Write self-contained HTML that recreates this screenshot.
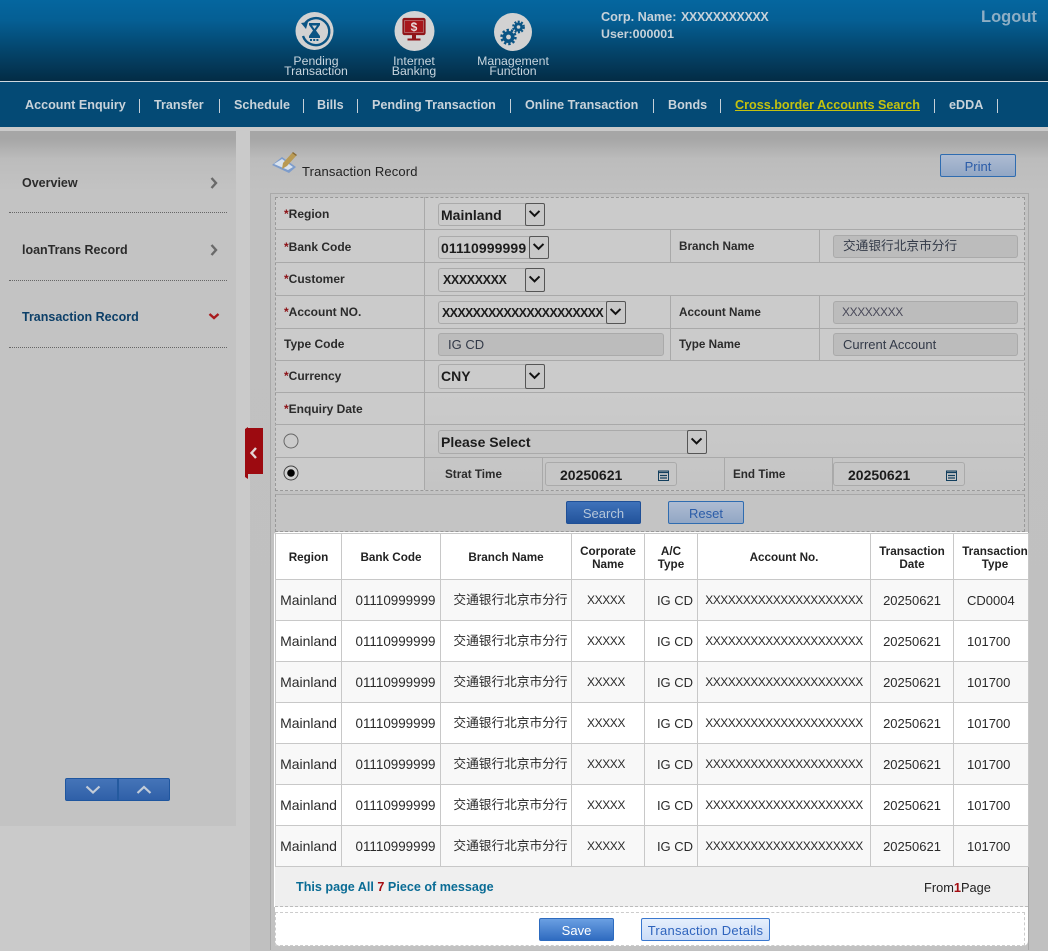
<!DOCTYPE html>
<html><head><meta charset="utf-8"><title>Transaction Record</title>
<style>
*{box-sizing:border-box}
html,body{margin:0;padding:0}
body{width:1048px;height:951px;position:relative;overflow:hidden;background:#cacaca;font-family:"Liberation Sans","Noto Sans CJK SC",sans-serif;color:#222}
.a{position:absolute;white-space:nowrap}
.n{position:absolute;top:97px;font:bold 12.6px/16px "Liberation Sans",sans-serif;color:#c9d3da;white-space:nowrap}
.s{position:absolute;top:99px;width:1px;height:14px;background:#c5d0d8}
.il{position:absolute;width:100px;text-align:center;font-size:12.3px;line-height:10px;color:#c8d5de}
.h{position:absolute;height:1px;background:#a9a9a9;left:275px;width:749px}
.v{position:absolute;width:1px;background:#a9a9a9}
.l{position:absolute;font:bold 12px/14px "Liberation Sans",sans-serif;color:#2b2b2b;white-space:nowrap}
.l.r{font-size:11.7px;margin-top:1px}
.l b{color:#8c1015}
.sel{position:absolute;background:#cbcbcb;border:1px solid #aaa;border-radius:3px;font:bold 14px/22px "Liberation Sans",sans-serif;color:#1c1c1c;padding-left:2px;white-space:nowrap}
.sel svg{position:absolute;right:-1px;top:-1px;width:20px;height:calc(100% + 2px);background:#c8c8c8;border:1px solid #555;border-radius:2px}
.inp{position:absolute;background:#bcbcbc;border:1px solid #aaa;border-radius:3px;font:13px/21px "Liberation Sans","Noto Sans CJK SC",sans-serif;color:#333a48;padding-left:9px;white-space:nowrap}
.date{position:absolute;top:462px;width:132px;height:24px;border:1px solid #aaa;border-radius:3px;font:bold 14px/25px "Liberation Sans",sans-serif;color:#1c1c1c;padding-left:14px;background:#c6c6c6}
.date svg{position:absolute;right:7px;top:7px}
.btn{position:absolute;height:23px;border-radius:2px;text-align:center;font:13px/23px "Liberation Sans","Noto Sans CJK SC",sans-serif}
.dk{background:linear-gradient(#3f72ba,#22539b);border:1px solid #1f4f96;color:#b5c6da}
.lt{background:linear-gradient(#aebcd2,#92a7c4);border:1px solid #2f6cb0;color:#2b5ca8}
table{position:absolute;left:275px;top:533px;width:753px;border-collapse:collapse;table-layout:fixed;background:#fff}
td,th{border:1px solid #c8c8c8;text-align:center;padding:0;font:13px/13px "Liberation Sans","Noto Sans CJK SC",sans-serif;color:#2a2a2a;overflow:hidden;white-space:nowrap}
th{font:bold 11.7px/13px "Liberation Sans",sans-serif;height:46px;color:#222;background:#fff;padding-top:2px}
td{height:41px;background:#f8f8f8}
tr.w td{background:#fff}
td.m{font-size:14px}
td.d{font-size:13.4px;padding-left:9px}
td.c{font-size:12.7px;padding-left:9px}
td.i{padding-left:8px}
td.x{font-size:12px;letter-spacing:-.5px}
td.f{font-size:12px;letter-spacing:-.4px;padding-right:4px}
td.t{text-align:left;padding-left:13px}
th.t{padding-left:8px}
</style></head><body>

<div class="a" style="left:0;top:0;width:1048px;height:81px;background:linear-gradient(#05669f 0,#055f94 25%,#04456c 62%,#032c45 100%)"></div>
<div class="a" style="left:0;top:81px;width:1048px;height:1px;background:#cfd8de"></div>
<div class="a" style="left:0;top:82px;width:1048px;height:45px;background:#044a75"></div>

<svg class="a" style="left:290px;top:7px" width="50" height="50" viewBox="0 0 50 50"><circle cx="24.500" cy="24" r="19" fill="#d2d2d2"/><path d="M14 18a13.500 13.500 0 1 1-1 11" fill="none" stroke="#0a5484" stroke-width="2.400"/><path d="M11 16l7-1-2 7z" fill="#0a5484"/><path d="M19 16h11v2l-4 5.500 4 5.500v2H19v-2l4-5.500-4-5.500z" fill="#0a5484"/><path d="M22 18.500h5l-2.500 3.500z" fill="#d2d2d2"/><path d="M20 33h9" stroke="#0a5484" stroke-width="2" stroke-dasharray="2 1.200"/></svg>
<svg class="a" style="left:390px;top:7px" width="50" height="50" viewBox="0 0 50 50"><circle cx="24.500" cy="24" r="20" fill="#d4d4d4"/><rect x="13.500" y="12" width="21" height="15" rx="1" fill="none" stroke="#8f1418" stroke-width="2.200"/><rect x="15" y="13.500" width="18" height="12" fill="#a8161b"/><text x="24" y="24" text-anchor="middle" font-family="Liberation Sans" font-weight="bold" font-size="12" fill="#e8dada">$</text><path d="M22 27.500h4v4h-4zM17.500 31.500h13v2h-13z" fill="#8f1418"/></svg>
<svg class="a" style="left:490px;top:7px" width="50" height="50" viewBox="0 0 50 50"><circle cx="23" cy="25" r="19" fill="#d2d2d2"/><g fill="none" stroke="#0a5484"><circle cx="18.500" cy="30" r="4.200" stroke-width="3.600"/><circle cx="18.500" cy="30" r="7" stroke-width="2.400" stroke-dasharray="2.400 2"/><circle cx="28.500" cy="20" r="3.200" stroke-width="2.800"/><circle cx="28.500" cy="20" r="5.400" stroke-width="2" stroke-dasharray="2 1.500"/></g></svg>

<div class="il" style="left:266px;top:56px">Pending<br>Transaction</div>
<div class="il" style="left:364px;top:56px">Internet<br>Banking</div>
<div class="il" style="left:463px;top:56px">Management<br>Function</div>

<div class="a" style="left:601px;top:10px;font:bold 12.7px/15px 'Liberation Sans',sans-serif;color:#c7d2da">Corp. Name:</div>
<div class="a" style="left:681px;top:10px;font:bold 12.500px/15px 'Liberation Sans',sans-serif;letter-spacing:-.4px;color:#c7d2da">XXXXXXXXXXX</div>
<div class="a" style="left:601px;top:27px;font:bold 12.4px/15px 'Liberation Sans',sans-serif;color:#c7d2da">User:000001</div>
<div class="a" style="left:981px;top:7px;font:bold 16.500px/20px 'Liberation Sans',sans-serif;color:#8eaec4">Logout</div>

<div class="n" style="left:25px">Account Enquiry</div><div class="s" style="left:139px"></div>
<div class="n" style="left:154px">Transfer</div><div class="s" style="left:219px"></div>
<div class="n" style="left:234px">Schedule</div><div class="s" style="left:303px"></div>
<div class="n" style="left:317px">Bills</div><div class="s" style="left:357px"></div>
<div class="n" style="left:372px">Pending Transaction</div><div class="s" style="left:510px"></div>
<div class="n" style="left:525px">Online Transaction</div><div class="s" style="left:653px"></div>
<div class="n" style="left:668px">Bonds</div><div class="s" style="left:720px"></div>
<div class="n" style="left:735px;color:#c4c20e;text-decoration:underline">Cross.border Accounts Search</div><div class="s" style="left:934px"></div>
<div class="n" style="left:949px">eDDA</div><div class="s" style="left:997px"></div>

<!-- sidebar -->
<div class="a" style="left:0;top:131px;width:236px;height:695px;background:linear-gradient(#a6a6a6 0,#a6a6a6 8px,#bcbcbc 28px,#c3c3c3 60px,#c3c3c3 100%)"></div>
<div class="a" style="left:22px;top:176px;font:bold 12.500px/15px 'Liberation Sans',sans-serif;color:#2b2b2b">Overview</div>
<div class="a" style="left:22px;top:243px;font:bold 12.500px/15px 'Liberation Sans',sans-serif;color:#2b2b2b">loanTrans Record</div>
<div class="a" style="left:22px;top:310px;font:bold 12.500px/15px 'Liberation Sans',sans-serif;color:#0c3f68">Transaction Record</div>
<svg class="a" style="left:209px;top:176px" width="10" height="14"><path d="M2.500 2l4.500 5-4.500 5" fill="none" stroke="#6a6a6a" stroke-width="2.400"/></svg>
<svg class="a" style="left:209px;top:243px" width="10" height="14"><path d="M2.500 2l4.500 5-4.500 5" fill="none" stroke="#6a6a6a" stroke-width="2.400"/></svg>
<svg class="a" style="left:208px;top:312px" width="12" height="10"><path d="M1.500 2l4.500 4 4.500-4" fill="none" stroke="#a81a1d" stroke-width="2.400"/></svg>
<div class="a" style="left:9px;top:212px;width:218px;border-top:1px dotted #666"></div>
<div class="a" style="left:9px;top:280px;width:218px;border-top:1px dotted #666"></div>
<div class="a" style="left:9px;top:347px;width:218px;border-top:1px dotted #666"></div>
<div class="a" style="left:65px;top:778px;width:105px;height:23px;background:linear-gradient(#4574b8,#2f60a8);border:1px solid #1f569f;border-radius:2px"></div>
<div class="a" style="left:117px;top:779px;width:2px;height:21px;background:#245a9f"></div>
<svg class="a" style="left:84px;top:784px" width="18" height="12"><path d="M2.500 2.500l6.500 6 6.500-6" fill="none" stroke="#c3ccd8" stroke-width="2.200"/></svg>
<svg class="a" style="left:135px;top:784px" width="18" height="12"><path d="M2.500 9l6.500-6 6.500 6" fill="none" stroke="#c3ccd8" stroke-width="2.200"/></svg>

<!-- main panel -->
<div class="a" style="left:250px;top:131px;width:798px;height:820px;background:linear-gradient(#a6a6a6 0,#a6a6a6 8px,#bcbcbc 28px,#c1c1c1 60px,#c0c0c0 100%)"></div>

<!-- red tab -->
<svg class="a" style="left:245px;top:425px" width="19" height="57"><path d="M0 4L3 2V3h15v46H3v5L0 52z" fill="#9c0a10"/><path d="M11 23l-4.500 5 4.500 5" fill="none" stroke="#e3d6d6" stroke-width="2.400"/></svg>

<svg class="a" style="left:271px;top:150px" width="28" height="28" viewBox="0 0 28 28"><path d="M1 15l10-8 14 10-7 6z" fill="#7d9ccb"/><path d="M3 14l8-5 11 8-5 3z" fill="#d9e3ef"/><path d="M11 19l1-6L21 3l4 3-9 10z" fill="#b99a54"/><path d="M21 3l1-1 4 3-1 1z" fill="#8a6a30"/></svg>
<div class="a" style="left:302px;top:164px;font:13px/16px 'Liberation Sans',sans-serif;letter-spacing:.15px;color:#222">Transaction Record</div>
<div class="btn lt" style="left:940px;top:154px;width:76px">Print</div>

<!-- form -->
<div class="a" style="left:270px;top:193px;width:759px;height:757px;border:1px solid #a9a9a9;border-bottom:0;background:#c2c2c2"></div>
<div class="a" style="left:275px;top:197px;width:750px;height:294px;background:#cbcbcb;border:1px dashed #999"></div>
<div class="a" style="left:424px;top:393px;width:600px;height:97px;background:linear-gradient(#cbcbcb,#c4c4c4)"></div>
<div class="a" style="left:275px;top:494px;width:750px;height:38px;background:#c4c4c4;border:1px dashed #999;border-top:1px solid #a9a9a9"></div>

<div class="h" style="top:229px"></div><div class="h" style="top:262px"></div><div class="h" style="top:295px"></div><div class="h" style="top:328px"></div><div class="h" style="top:360px"></div><div class="h" style="top:392px"></div><div class="h" style="top:424px"></div><div class="h" style="top:457px"></div>
<div class="v" style="left:424px;top:197px;height:293px"></div>
<div class="v" style="left:670px;top:229px;height:33px"></div><div class="v" style="left:819px;top:229px;height:33px"></div>
<div class="v" style="left:670px;top:295px;height:65px"></div><div class="v" style="left:819px;top:295px;height:65px"></div>
<div class="v" style="left:542px;top:457px;height:33px"></div><div class="v" style="left:724px;top:457px;height:33px"></div><div class="v" style="left:832px;top:457px;height:33px"></div>

<div class="l" style="left:284px;top:207px"><b>*</b>Region</div>
<div class="l" style="left:284px;top:240px"><b>*</b>Bank Code</div>
<div class="l" style="left:284px;top:272px"><b>*</b>Customer</div>
<div class="l" style="left:284px;top:305px"><b>*</b>Account NO.</div>
<div class="l" style="left:284px;top:337px">Type Code</div>
<div class="l" style="left:284px;top:369px"><b>*</b>Currency</div>
<div class="l" style="left:284px;top:402px"><b>*</b>Enquiry Date</div>
<div class="l r" style="left:679px;top:239px">Branch Name</div>
<div class="l r" style="left:679px;top:305px">Account Name</div>
<div class="l r" style="left:679px;top:337px">Type Name</div>
<div class="l r" style="left:445px;top:467px">Strat Time</div>
<div class="l r" style="left:733px;top:467px">End Time</div>

<div class="sel" style="left:438px;top:203px;width:107px;height:23px">Mainland<svg viewBox="0 0 20 23"><path d="M4 7.500l5.500 5.500L15 7.500" fill="none" stroke="#111" stroke-width="2.200"/></svg></div>
<div class="sel" style="left:438px;top:236px;width:111px;height:23px;letter-spacing:.1px">01110999999<svg viewBox="0 0 20 23"><path d="M4 7.500l5.500 5.500L15 7.500" fill="none" stroke="#111" stroke-width="2.200"/></svg></div>
<div class="sel" style="left:438px;top:268px;width:107px;height:24px;padding-left:4px;font-size:12.500px;letter-spacing:-.4px">XXXXXXXX<svg viewBox="0 0 20 24"><path d="M4 8l5.500 5.500L15 8" fill="none" stroke="#111" stroke-width="2.200"/></svg></div>
<div class="sel" style="left:438px;top:301px;width:188px;height:23px;padding-left:3px;font-size:12.500px;letter-spacing:-.67px">XXXXXXXXXXXXXXXXXXXXX<svg viewBox="0 0 20 23"><path d="M4 7.500l5.500 5.500L15 7.500" fill="none" stroke="#111" stroke-width="2.200"/></svg></div>
<div class="sel" style="left:438px;top:364px;width:107px;height:25px">CNY<svg viewBox="0 0 20 25"><path d="M4 8.500l5.500 5.500L15 8.500" fill="none" stroke="#111" stroke-width="2.200"/></svg></div>
<div class="sel" style="left:438px;top:430px;width:269px;height:24px;background:#c5c5c5">Please Select<svg viewBox="0 0 20 24"><path d="M4 8l5.500 5.500L15 8" fill="none" stroke="#111" stroke-width="2.200"/></svg></div>

<div class="inp" style="left:438px;top:333px;width:226px;height:23px">IG CD</div>
<div class="inp" style="left:833px;top:235px;width:185px;height:23px;font-size:12.7px">交通银行北京市分行</div>
<div class="inp" style="left:833px;top:301px;width:185px;height:23px;padding-left:8px;font-size:12px;letter-spacing:-.4px;color:#4a4a5a">XXXXXXXX</div>
<div class="inp" style="left:833px;top:333px;width:185px;height:23px">Current Account</div>

<svg class="a" style="left:283px;top:433px" width="16" height="16"><circle cx="8" cy="8" r="7" fill="#cbcbcb" stroke="#666"/></svg>
<svg class="a" style="left:283px;top:465px" width="16" height="16"><circle cx="8" cy="8" r="7" fill="#d0d0d0" stroke="#444"/><circle cx="8" cy="8" r="3.800" fill="#000"/></svg>

<div class="date" style="left:545px">20250621<svg width="11" height="11" viewBox="0 0 11 11"><rect x=".5" y="1" width="10" height="9.500" fill="#c6c6c6" stroke="#123f5e"/><path d="M0 2.500h11M2 5.500h7M2 8h7" stroke="#123f5e" stroke-width="1.200"/></svg></div>
<div class="date" style="left:833px">20250621<svg width="11" height="11" viewBox="0 0 11 11"><rect x=".5" y="1" width="10" height="9.500" fill="#c6c6c6" stroke="#123f5e"/><path d="M0 2.500h11M2 5.500h7M2 8h7" stroke="#123f5e" stroke-width="1.200"/></svg></div>

<div class="btn dk" style="left:566px;top:501px;width:75px">Search</div>
<div class="btn lt" style="left:668px;top:501px;width:76px">Reset</div>

<!-- table -->
<div class="a" style="left:274px;top:532px;width:754px;height:375px;background:#fff;border-radius:3px 0 0 0"></div>
<table>
<colgroup><col style="width:66px"><col style="width:99px"><col style="width:131px"><col style="width:73px"><col style="width:53px"><col style="width:173px"><col style="width:83px"><col style="width:75px"></colgroup>
<tr class="w"><th>Region</th><th>Bank Code</th><th>Branch Name</th><th>Corporate<br>Name</th><th>A/C<br>Type</th><th>Account No.</th><th>Transaction<br>Date</th><th class="t">Transaction<br>Type</th></tr>
<tr><td class="m">Mainland</td><td class="d">01110999999</td><td class="c">交通银行北京市分行</td><td class="f">XXXXX</td><td class="i">IG CD</td><td class="x">XXXXXXXXXXXXXXXXXXXXX</td><td>20250621</td><td class="t">CD0004</td></tr>
<tr class="w"><td class="m">Mainland</td><td class="d">01110999999</td><td class="c">交通银行北京市分行</td><td class="f">XXXXX</td><td class="i">IG CD</td><td class="x">XXXXXXXXXXXXXXXXXXXXX</td><td>20250621</td><td class="t">101700</td></tr>
<tr><td class="m">Mainland</td><td class="d">01110999999</td><td class="c">交通银行北京市分行</td><td class="f">XXXXX</td><td class="i">IG CD</td><td class="x">XXXXXXXXXXXXXXXXXXXXX</td><td>20250621</td><td class="t">101700</td></tr>
<tr class="w"><td class="m">Mainland</td><td class="d">01110999999</td><td class="c">交通银行北京市分行</td><td class="f">XXXXX</td><td class="i">IG CD</td><td class="x">XXXXXXXXXXXXXXXXXXXXX</td><td>20250621</td><td class="t">101700</td></tr>
<tr><td class="m">Mainland</td><td class="d">01110999999</td><td class="c">交通银行北京市分行</td><td class="f">XXXXX</td><td class="i">IG CD</td><td class="x">XXXXXXXXXXXXXXXXXXXXX</td><td>20250621</td><td class="t">101700</td></tr>
<tr class="w"><td class="m">Mainland</td><td class="d">01110999999</td><td class="c">交通银行北京市分行</td><td class="f">XXXXX</td><td class="i">IG CD</td><td class="x">XXXXXXXXXXXXXXXXXXXXX</td><td>20250621</td><td class="t">101700</td></tr>
<tr><td class="m">Mainland</td><td class="d">01110999999</td><td class="c">交通银行北京市分行</td><td class="f">XXXXX</td><td class="i">IG CD</td><td class="x">XXXXXXXXXXXXXXXXXXXXX</td><td>20250621</td><td class="t">101700</td></tr>
</table>

<div class="a" style="left:275px;top:866px;width:753px;height:41px;background:#efefef;border-top:1px solid #c8c8c8;border-bottom:1px dashed #bbb"></div>
<div class="a" style="left:296px;top:880px;font:bold 12.6px/15px 'Liberation Sans',sans-serif;color:#0a6c95">This page All <span style="color:#a50d12">7</span> Piece of message</div>
<div class="a" style="left:924px;top:880px;font:12.8px/15px 'Liberation Sans',sans-serif;color:#222">From<b style="color:#a50d12">1</b>Page</div>
<div class="a" style="left:275px;top:907px;width:753px;height:39px;background:#fff;border-radius:0 0 5px 5px"></div>
<div class="a" style="left:275px;top:912px;width:750px;height:34px;border:1px dashed #ccc"></div>
<div class="btn" style="left:539px;top:918px;width:75px;background:linear-gradient(#6a9fe2,#2f6bc0);border:1px solid #2d6bbf;color:#fff">Save</div>
<div class="btn" style="left:641px;top:918px;width:129px;background:linear-gradient(#e6effc,#cbdcf7);border:1px solid #3a78cf;color:#2f64bd;letter-spacing:.25px">Transaction Details</div>
</body></html>
